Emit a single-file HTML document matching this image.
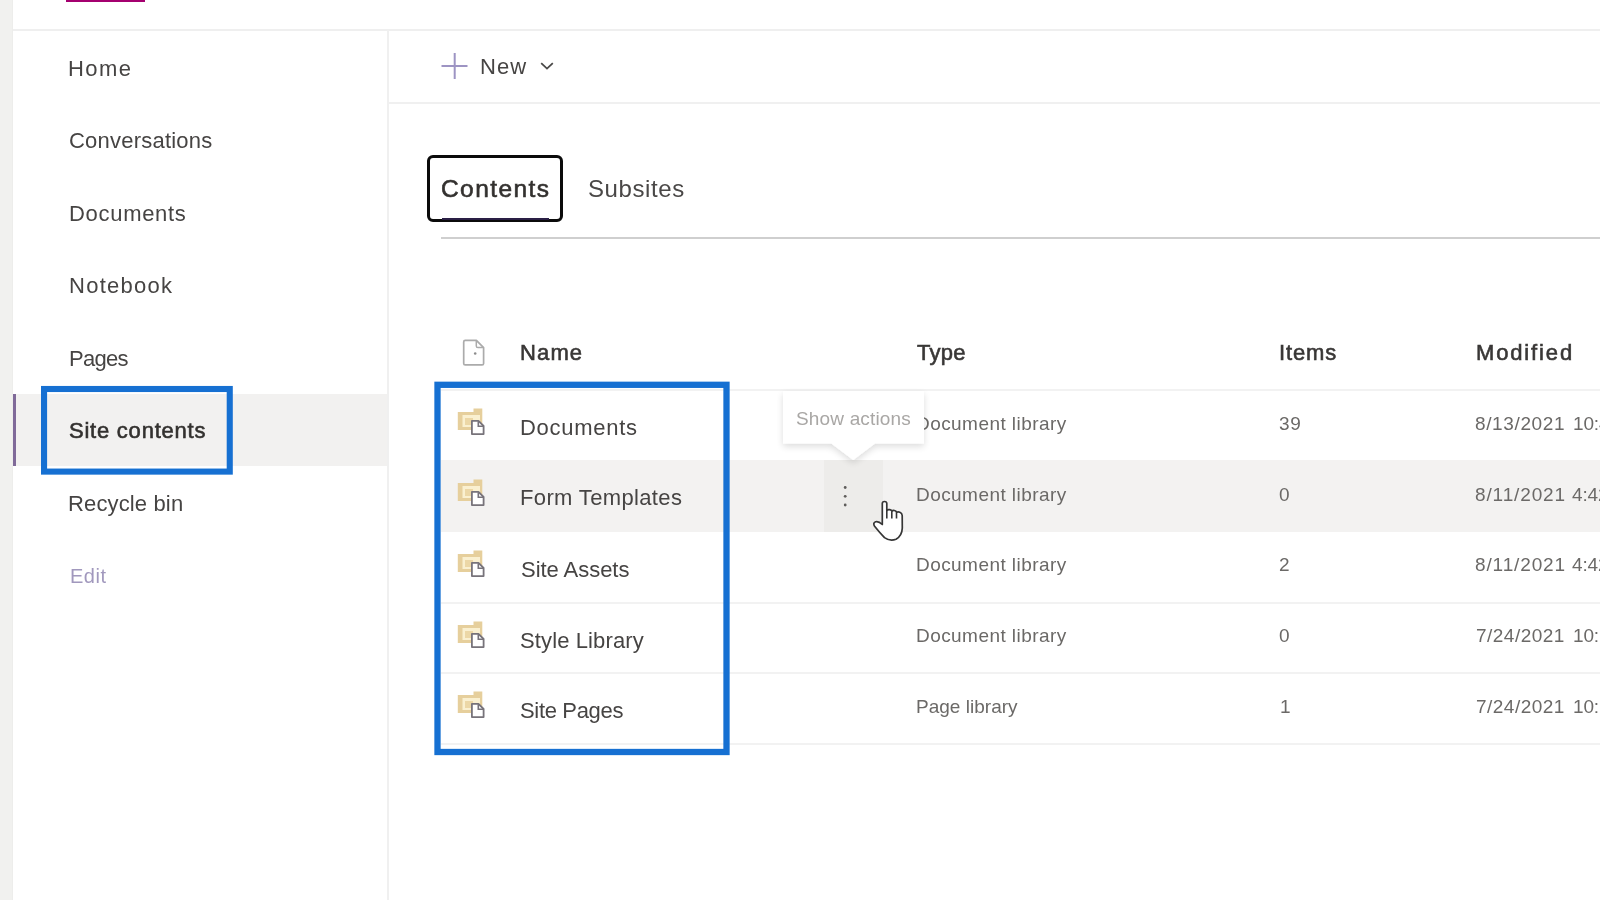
<!DOCTYPE html>
<html lang="en">
<head>
<meta charset="utf-8">
<title>Site contents</title>
<style>
*{box-sizing:border-box;margin:0;padding:0}
html,body{width:1600px;height:900px;overflow:hidden;background:#fff}
body{position:relative;font-family:"Liberation Sans",sans-serif;color:#3b3a39}
.abs{position:absolute}
.t{position:absolute;white-space:nowrap;line-height:1;will-change:transform}
.strip{left:0;top:0;width:12px;height:900px;background:#f1f1ef}
.stripedge{left:12px;top:0;width:1px;height:900px;background:#ededeb}
.brand{left:66px;top:0;width:79px;height:2px;background:#a4006f}
.hline1{left:13px;top:29px;width:1587px;height:2px;background:#efefef}
.vline{left:387px;top:30px;width:2px;height:870px;background:#f0f0f0}
.hline2{left:389px;top:102px;width:1211px;height:2px;background:#f0f0f0}
.sel{left:13px;top:394px;width:374px;height:72px;background:#f2f1f0}
.selbar{left:13px;top:394px;width:3px;height:72px;background:#806a99}
.tabbox{left:427px;top:155px;width:136px;height:67px;border:3px solid #0b0b0b;border-radius:6px}
.tabul{left:442px;top:218px;width:107px;height:2px;background:#2a1f45}
.tabline{left:441px;top:237px;width:1159px;height:2px;background:#cfcfcf}
.rowline{left:441px;width:1159px;height:2px;background:#f2f2f2}
.hover{left:441px;top:460px;width:1159px;height:72px;background:#f3f2f1}
.hbtn{left:824px;top:460px;width:59px;height:72px;background:#edecea}
.ico{position:absolute;left:456px;width:32px;height:36px}
</style>
</head>
<body>
<div class="abs strip"></div><div class="abs stripedge"></div>
<div class="abs brand"></div>
<div class="abs hline1"></div>
<div class="abs vline"></div>
<div class="abs hline2"></div>

<div class="abs sel"></div><div class="abs selbar"></div>

<svg class="abs" style="left:440px;top:52px" width="30" height="30" viewBox="0 0 30 30"><path d="M1.5 14h26M14.7 1v26" stroke="#9d94c3" stroke-width="2" fill="none"/></svg>
<svg class="abs" style="left:539px;top:60px" width="16" height="12" viewBox="0 0 16 12"><path d="M2.2 3.200L8 8.600L13.800 3.200" stroke="#4a4948" stroke-width="1.800" fill="none"/></svg>

<div class="abs tabbox"></div><div class="abs tabul"></div>
<div class="abs tabline"></div>

<svg class="abs" style="left:458px;top:335px" width="32" height="36" viewBox="458 335 32 36"><path d="M465.200 340.400H476.400L483.600 347.600V363.400Q483.600 364.900 482.100 364.900H465.200Q463.700 364.900 463.700 363.400V341.900Q463.700 340.400 465.200 340.400z" stroke="#ababab" stroke-width="1.700" fill="none" stroke-linejoin="round"/><path d="M476.300 340.800V345.900Q476.300 347.500 477.900 347.500H483.200" stroke="#ababab" stroke-width="1.500" fill="none"/><circle cx="475.200" cy="353.500" r="1.300" fill="#8c8c8c"/></svg>

<div class="abs hover"></div><div class="abs hbtn"></div>
<div class="abs rowline" style="top:389px"></div>
<div class="abs rowline" style="top:602px"></div>
<div class="abs rowline" style="top:672px"></div>
<div class="abs rowline" style="top:743px"></div>

<svg class="ico" style="top:400px" viewBox="0 0 32 36"><path d="M1.800 12h15.700v-3.500h8.800v21.500h-24.500z" fill="#e6cf9c"/><path d="M6.500 15h17.500v12h-17.500z" fill="#faf0d0"/><path d="M9 18h8v7h-8z" fill="#ecd7a6"/><path d="M15.900 20.900h6.600l5.100 5.100v8.100h-11.700z" fill="#fff" stroke="#77737a" stroke-width="1.800" stroke-linejoin="round"/><path d="M22.300 21.200v5h5" fill="none" stroke="#77737a" stroke-width="1.600"/></svg>
<svg class="ico" style="top:471px" viewBox="0 0 32 36"><path d="M1.800 12h15.700v-3.500h8.800v21.500h-24.500z" fill="#e6cf9c"/><path d="M6.500 15h17.500v12h-17.500z" fill="#faf0d0"/><path d="M9 18h8v7h-8z" fill="#ecd7a6"/><path d="M15.900 20.900h6.600l5.100 5.100v8.100h-11.700z" fill="#fff" stroke="#77737a" stroke-width="1.800" stroke-linejoin="round"/><path d="M22.300 21.200v5h5" fill="none" stroke="#77737a" stroke-width="1.600"/></svg>
<svg class="ico" style="top:542px" viewBox="0 0 32 36"><path d="M1.800 12h15.700v-3.500h8.800v21.500h-24.500z" fill="#e6cf9c"/><path d="M6.500 15h17.500v12h-17.500z" fill="#faf0d0"/><path d="M9 18h8v7h-8z" fill="#ecd7a6"/><path d="M15.900 20.900h6.600l5.100 5.100v8.100h-11.700z" fill="#fff" stroke="#77737a" stroke-width="1.800" stroke-linejoin="round"/><path d="M22.300 21.200v5h5" fill="none" stroke="#77737a" stroke-width="1.600"/></svg>
<svg class="ico" style="top:613px" viewBox="0 0 32 36"><path d="M1.800 12h15.700v-3.500h8.800v21.500h-24.500z" fill="#e6cf9c"/><path d="M6.500 15h17.500v12h-17.500z" fill="#faf0d0"/><path d="M9 18h8v7h-8z" fill="#ecd7a6"/><path d="M15.900 20.900h6.600l5.100 5.100v8.100h-11.700z" fill="#fff" stroke="#77737a" stroke-width="1.800" stroke-linejoin="round"/><path d="M22.300 21.200v5h5" fill="none" stroke="#77737a" stroke-width="1.600"/></svg>
<svg class="ico" style="top:683px" viewBox="0 0 32 36"><path d="M1.800 12h15.700v-3.500h8.800v21.500h-24.500z" fill="#e6cf9c"/><path d="M6.500 15h17.500v12h-17.500z" fill="#faf0d0"/><path d="M9 18h8v7h-8z" fill="#ecd7a6"/><path d="M15.900 20.900h6.600l5.100 5.100v8.100h-11.700z" fill="#fff" stroke="#77737a" stroke-width="1.800" stroke-linejoin="round"/><path d="M22.300 21.200v5h5" fill="none" stroke="#77737a" stroke-width="1.600"/></svg>

<!-- dots -->
<svg class="abs" style="left:840px;top:482px" width="10" height="28" viewBox="0 0 10 28"><circle cx="5.200" cy="5.500" r="1.400" fill="#5f5d5b"/><circle cx="5.200" cy="14.300" r="1.400" fill="#5f5d5b"/><circle cx="5.200" cy="23" r="1.400" fill="#5f5d5b"/></svg>

<div class="t" id="n1" style="left:68.10px;top:58.38px;font-size:22px;color:#464443;letter-spacing:1.400px;">Home</div>
<div class="t" id="n2" style="left:69.00px;top:129.78px;font-size:22px;color:#464443;letter-spacing:0.217px;">Conversations</div>
<div class="t" id="n3" style="left:68.50px;top:203.38px;font-size:22px;color:#464443;letter-spacing:0.700px;">Documents</div>
<div class="t" id="n4" style="left:68.50px;top:274.68px;font-size:22px;color:#464443;letter-spacing:1.257px;">Notebook</div>
<div class="t" id="n5" style="left:68.50px;top:347.98px;font-size:22px;color:#464443;letter-spacing:-0.700px;">Pages</div>
<div class="t" id="n6" style="left:68.90px;top:419.58px;font-size:22px;color:#33312f;letter-spacing:0.767px;-webkit-text-stroke:0.6px currentColor;">Site contents</div>
<div class="t" id="n7" style="left:68.20px;top:493.18px;font-size:22px;color:#464443;letter-spacing:0.140px;">Recycle bin</div>
<div class="t" id="n8" style="left:69.80px;top:566.37px;font-size:20px;color:#a198bd;letter-spacing:0.533px;">Edit</div>
<div class="t" id="new" style="left:480.00px;top:56.08px;font-size:22px;color:#464443;letter-spacing:1.100px;">New</div>
<div class="t" id="tab1" style="left:441.10px;top:177.26px;font-size:24.5px;color:#33312f;letter-spacing:1.429px;-webkit-text-stroke:0.6px currentColor;">Contents</div>
<div class="t" id="tab2" style="left:588.40px;top:176.68px;font-size:24px;color:#4a4847;letter-spacing:0.600px;">Subsites</div>
<div class="t" id="h1" style="left:520.20px;top:341.68px;font-size:22px;color:#393736;letter-spacing:1.133px;-webkit-text-stroke:0.6px currentColor;">Name</div>
<div class="t" id="h2" style="left:917.30px;top:341.68px;font-size:22px;color:#393736;letter-spacing:0.267px;-webkit-text-stroke:0.6px currentColor;">Type</div>
<div class="t" id="h3" style="left:1278.50px;top:341.68px;font-size:22px;color:#393736;letter-spacing:0.850px;-webkit-text-stroke:0.6px currentColor;">Items</div>
<div class="t" id="h4" style="left:1475.90px;top:341.68px;font-size:22px;color:#393736;letter-spacing:1.857px;-webkit-text-stroke:0.6px currentColor;">Modified</div>
<div class="t" id="r1" style="left:519.90px;top:416.88px;font-size:22px;color:#464443;letter-spacing:0.725px;">Documents</div>
<div class="t" id="r2" style="left:519.90px;top:486.78px;font-size:22px;color:#464443;letter-spacing:0.354px;">Form Templates</div>
<div class="t" id="r3" style="left:520.90px;top:558.98px;font-size:22px;color:#464443;letter-spacing:-0.040px;">Site Assets</div>
<div class="t" id="r4" style="left:520.10px;top:629.88px;font-size:22px;color:#464443;letter-spacing:0.117px;">Style Library</div>
<div class="t" id="r5" style="left:520.10px;top:700.38px;font-size:22px;color:#464443;letter-spacing:-0.333px;">Site Pages</div>
<div class="t" id="y1" style="left:916.00px;top:413.92px;font-size:19px;color:#6b6967;letter-spacing:0.440px;">Document library</div>
<div class="t" id="y2" style="left:916.00px;top:484.52px;font-size:19px;color:#6b6967;letter-spacing:0.440px;">Document library</div>
<div class="t" id="y3" style="left:916.00px;top:555.12px;font-size:19px;color:#6b6967;letter-spacing:0.440px;">Document library</div>
<div class="t" id="y4" style="left:916.00px;top:626.12px;font-size:19px;color:#6b6967;letter-spacing:0.440px;">Document library</div>
<div class="t" id="y5" style="left:916.00px;top:696.92px;font-size:19px;color:#6b6967;letter-spacing:0.018px;">Page library</div>
<div class="t" id="i1" style="left:1278.50px;top:413.92px;font-size:19px;color:#6b6967;letter-spacing:0.800px;">39</div>
<div class="t" id="i2" style="left:1278.50px;top:484.52px;font-size:19px;color:#6b6967;">0</div>
<div class="t" id="i3" style="left:1278.50px;top:555.12px;font-size:19px;color:#6b6967;">2</div>
<div class="t" id="i4" style="left:1278.50px;top:626.12px;font-size:19px;color:#6b6967;">0</div>
<div class="t" id="i5" style="left:1279.50px;top:696.92px;font-size:19px;color:#6b6967;">1</div>
<div class="t" id="m1" style="left:1475.00px;top:413.92px;font-size:19px;color:#6b6967;letter-spacing:0.625px;">8/13/2021</div>
<div class="t" id="t1" style="left:1573.20px;top:413.92px;font-size:19px;color:#6b6967;letter-spacing:-0.150px;">10:45 AM</div>
<div class="t" id="m2" style="left:1475.00px;top:484.52px;font-size:19px;color:#6b6967;letter-spacing:0.875px;">8/11/2021</div>
<div class="t" id="t2" style="left:1571.90px;top:484.52px;font-size:19px;color:#6b6967;letter-spacing:-0.150px;">4:42 AM</div>
<div class="t" id="m3" style="left:1475.00px;top:555.12px;font-size:19px;color:#6b6967;letter-spacing:0.875px;">8/11/2021</div>
<div class="t" id="t3" style="left:1571.90px;top:555.12px;font-size:19px;color:#6b6967;letter-spacing:-0.150px;">4:42 AM</div>
<div class="t" id="m4" style="left:1476.40px;top:626.12px;font-size:19px;color:#6b6967;letter-spacing:0.475px;">7/24/2021</div>
<div class="t" id="t4" style="left:1573.20px;top:626.12px;font-size:19px;color:#6b6967;letter-spacing:-0.150px;">10:12 PM</div>
<div class="t" id="m5" style="left:1476.40px;top:696.92px;font-size:19px;color:#6b6967;letter-spacing:0.475px;">7/24/2021</div>
<div class="t" id="t5" style="left:1573.20px;top:696.92px;font-size:19px;color:#6b6967;letter-spacing:-0.150px;">10:12 PM</div>

<!-- tooltip -->
<svg class="abs" style="left:760px;top:370px;overflow:visible" width="190" height="110" viewBox="760 370 190 110"><defs><filter id="sh" x="-20%" y="-30%" width="140%" height="170%"><feGaussianBlur in="SourceAlpha" stdDeviation="3.500"/><feOffset dy="2.500" result="b"/><feComponentTransfer><feFuncA type="linear" slope="0.140"/></feComponentTransfer><feMerge><feMergeNode/><feMergeNode in="SourceGraphic"/></feMerge></filter></defs><path d="M783 391H924V443.600H875L853.200 460L831.300 443.600H783z" fill="#fff" filter="url(#sh)"/></svg>
<div class="t" id="tip" style="left:795.90px;top:408.72px;font-size:19px;color:#a9a7a5;letter-spacing:0.164px;">Show actions</div>

<svg class="abs" style="left:0;top:0" width="1600" height="900" viewBox="0 0 1600 900"><rect x="44.050" y="389" width="185.700" height="82.600" fill="none" stroke="#1670d2" stroke-width="6.100"/><rect x="437.500" y="384.800" width="289" height="367.200" fill="none" stroke="#1670d2" stroke-width="6.300"/></svg>

<!-- cursor -->
<svg class="abs" style="left:868px;top:496px" width="40" height="50" viewBox="868 496 40 50"><path d="M882.300 523.500V503.600Q882.300 501.500 884.500 501.500Q886.800 501.500 886.800 503.600V510.600C887.500 509.300 891 509.200 891.900 511.200C892.800 509.900 896 510.200 896.600 512.300C898 511.300 902 512 902.200 515.500L902.300 528Q902 536 896 539.200Q890 541.600 884.500 537.600Q880 533 874.600 526.200Q872.600 523 875.600 521.800Q878.600 521 882.300 524.500z" fill="#fff" stroke="#363636" stroke-width="1.700" stroke-linejoin="round"/><path d="M886.800 510.500V518.600M891.800 511.500V518.600M896.500 512.600V518.600" stroke="#363636" stroke-width="1.600" fill="none"/></svg>
</body>
</html>
